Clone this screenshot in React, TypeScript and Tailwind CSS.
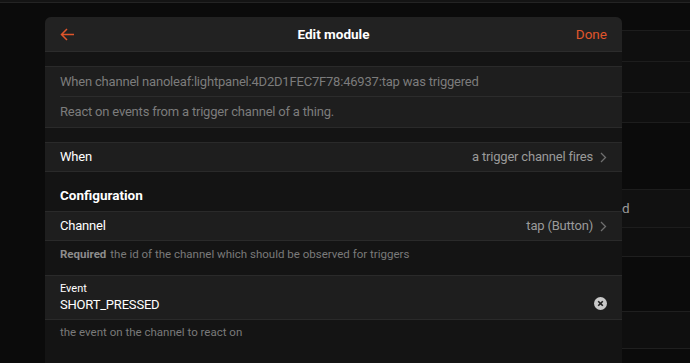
import React from "react";

function Chevron() {
  return (
    <svg width="7" height="11" viewBox="0 0 7 11" className="ml-[7px]">
      <path d="M1 1l4.5 4.5L1 10" fill="none" stroke="#6f6f6f" strokeWidth="1.3" />
    </svg>
  );
}

function BackgroundPage() {
  return (
    <div className="absolute inset-0 bg-[#0b0b0b]">
      <div className="h-[3px] border-b border-[#242424] bg-[#141414]" />
      <div className="ml-[622px] mt-[27px] flex flex-col">
        <div className="h-[31px] border-t border-[#1d1d1d] bg-[#0f0f0f]" />
        <div className="h-[31px] border-t border-[#1d1d1d] bg-[#0f0f0f]" />
        <div className="h-[31px] border-y border-[#1d1d1d] bg-[#0f0f0f]" />
        <div className="h-[66px]" />
        <div className="flex h-[39px] items-center border-y border-[#1d1d1d] bg-[#111111] text-[13.5px] text-[#9a9a9a]">
          d
        </div>
        <div className="h-[29px] border-b border-[#1f1f1f] bg-[#0f0f0f]" />
        <div className="h-[54px]" />
        <div className="h-[38px] border-y border-[#1f1f1f] bg-[#0f0f0f]" />
      </div>
    </div>
  );
}

export default function App() {
  return (
    <div
      className="relative h-[363px] w-[690px] overflow-hidden"
      style={{ fontFamily: "Roboto, 'Liberation Sans', sans-serif" }}
    >
      <BackgroundPage />

      <div className="absolute left-[45px] top-[17px] h-[360px] w-[577px] overflow-hidden rounded-t-[6px] bg-[#141414]">
        {/* header */}
        <div className="grid h-[35px] grid-cols-[1fr_auto_1fr] items-center border-b border-[#2c2c2c] bg-[#222222] px-[15px]">
          <svg width="15" height="13" viewBox="0 0 15 13">
            <path d="M14 6.5H2M7 1L1.5 6.5L7 12" fill="none" stroke="#e0552b" strokeWidth="1.5" />
          </svg>
          <div className="text-[13.5px] font-bold text-white">Edit module</div>
          <div className="justify-self-end text-[13.5px] text-[#e0552b]">Done</div>
        </div>

        {/* description */}
        <div className="mt-[14px] border-y border-[#2a2a2a] bg-[#1e1e1e] pl-[15px] text-[13px] tracking-[-0.2px] text-[#7c7c7c]">
          <div className="flex h-[30px] items-center border-b border-[#2c2c2c]">
            When channel nanoleaf:lightpanel:4D2D1FEC7F78:46937:tap was triggered
          </div>
          <div className="flex h-[30px] items-center">
            React on events from a trigger channel of a thing.
          </div>
        </div>

        {/* when */}
        <div className="mt-[14px] flex h-[30px] items-center justify-between border-y border-[#2a2a2a] bg-[#1e1e1e] px-[15px] text-[13px] tracking-[-0.2px]">
          <span className="text-white">When</span>
          <span className="flex items-center text-[#9a9a9a]">
            a trigger channel fires
            <Chevron />
          </span>
        </div>

        <div className="flex h-[39px] items-end px-[15px] pb-[6px] text-[13.5px] font-bold text-white">
          Configuration
        </div>

        {/* channel */}
        <div className="flex h-[30px] items-center justify-between border-y border-[#2a2a2a] bg-[#1e1e1e] px-[15px] text-[13px] tracking-[-0.2px]">
          <span className="text-white">Channel</span>
          <span className="flex items-center text-[#9a9a9a]">
            tap (Button)
            <Chevron />
          </span>
        </div>
        <div className="flex h-[27px] items-center px-[15px] text-[11.5px] text-[#7a7a7a]">
          <span className="mr-[4px] font-bold text-[#8c8c8c]">Required</span>
          the id of the channel which should be observed for triggers
        </div>

        {/* event */}
        <div className="mt-[7px] flex h-[45px] items-center justify-between border-y border-[#2a2a2a] bg-[#1e1e1e] px-[15px]">
          <div className="flex flex-col">
            <span className="text-[11px] leading-[14px] text-white">Event</span>
            <span className="text-[13px] leading-[18px] tracking-[-0.2px] text-white">SHORT_PRESSED</span>
          </div>
          <svg width="13" height="13" viewBox="0 0 13 13" className="mt-[12px]">
            <circle cx="6.5" cy="6.5" r="6.5" fill="#c9c9c9" />
            <path d="M4.2 4.2l4.6 4.6M8.8 4.2l-4.6 4.6" stroke="#1e1e1e" strokeWidth="1.6" />
          </svg>
        </div>
        <div className="flex h-[26px] items-center px-[15px] text-[11.5px] text-[#7a7a7a]">
          the event on the channel to react on
        </div>
      </div>
    </div>
  );
}
